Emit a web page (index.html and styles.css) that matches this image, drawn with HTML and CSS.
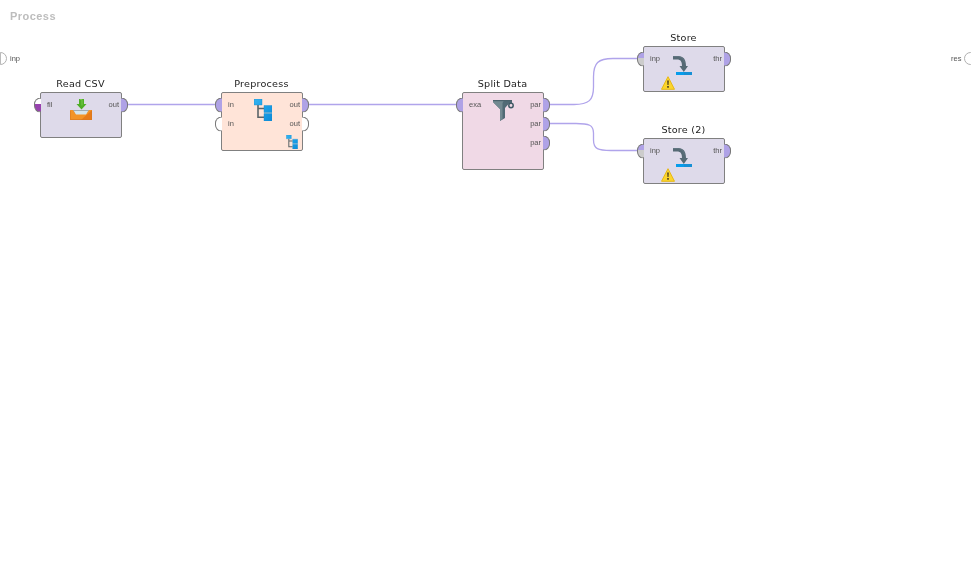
FILE: index.html
```html
<!DOCTYPE html>
<html lang="en">
<head>
<meta charset="utf-8">
<title>Process</title>
<link rel="stylesheet" href="styles.css">
</head>
<body>
<svg class="defs" width="0" height="0" aria-hidden="true">
  <defs>
    <linearGradient id="blue" x1="0" y1="0" x2="1" y2="1"><stop offset="0" stop-color="#35b2ef"/><stop offset=".5" stop-color="#1ba1e8"/><stop offset="1" stop-color="#0d8bd8"/></linearGradient>
    <symbol id="tree" viewBox="0 0 18 22">
      <path d="M4 6v12.3h6M4 9.5h6" fill="none" stroke="#5b6468" stroke-width="1.6"/>
      <path d="M0 0h8v6H0zM10 6.500h8v7h-8zM10 14.500h8V22h-8z" fill="url(#blue)" stroke="#168ccb" stroke-width=".4"/>
    </symbol>
    <symbol id="store" viewBox="0 0 19 19">
      <path d="M0 0h5c5.500 0 8 3.500 8 10H15l-4.200 6L6.500 10H9c0-4.500-1.500-6.500-5-6.500H0z" fill="#566a75"/>
      <path d="M0 .5h4c4 0 7 2 7.300 6" fill="none" stroke="#647984" stroke-width=".8"/>
      <path d="M3 16h16v3H3z" fill="#168fd5"/><path d="M3 16h8v3H3z" fill="#079ceb"/>
    </symbol>
    <symbol id="warning" viewBox="0 0 14 14">
      <path d="M7 .7 13.500 13.300H.5z" fill="#fbd52d" stroke="#e7b817" stroke-linejoin="round"/>
      <path d="M6.100 4.500h1.800l-.3 4.500H6.400zM6.100 10h1.800v1.800H6.100z" fill="#5c4c20"/>
    </symbol>
    <symbol id="import" viewBox="0 0 22 21">
      <path d="M2.500 11h17l2 3v2H.5v-2z" fill="#9eabb4"/>
      <path d="M4 12h14l-1.500 4h-11z" fill="#d5e4eb"/>
      <path d="M0 11h3l3 4.500h10l3-4.500h3v10H0z" fill="#f39427"/>
      <path d="M22 11v10H11z" fill="#e77b19"/>
      <path d="M.4 12v8.600h21.200V12" fill="none" stroke="#d9791e" stroke-width=".7"/>
      <path d="M9 0h5v5h2.500l-5 5.500L6.500 5H9z" fill="#4fae27"/>
      <path d="M10 .5h2v6" fill="none" stroke="#79c94d"/>
    </symbol>
    <symbol id="funnel" viewBox="0 0 21 21">
      <path d="M0 0h19v3h-2.500L12 8v10l-5 3V9L0 2z" fill="#516a75"/>
      <path d="M0 .4h11l-1.500 2.600v16.300L7 20.500V9L0 2z" fill="#738991"/>
      <path d="M0 .6h19" stroke="#4b626c" stroke-width="1.200"/>
      <circle cx="18" cy="5.500" r="2.200" fill="none" stroke="#405b66" stroke-width="1.500"/>
    </symbol>
  </defs>
</svg>
<main class="canvas">
  <h1 class="heading">Process</h1>
  <svg class="wires" width="971" height="587" viewBox="0 0 971 587" aria-hidden="true">
    <path d="M128 104.500H216M309 104.500H457M549 104.500H574C589 104.500 593.500 100 593.500 87V77C593.500 63 598 58.500 613 58.500H638M549 123.500H576C589 123.500 593.500 125 593.500 133V140C593.500 149 598 150.500 611 150.500H638"/>
  </svg>
  <div class="edge edge-in"><i class="ring"></i><span>inp</span></div>
  <div class="edge edge-out"><span>res</span><i class="ring"></i></div>

  <section class="node read lilac">
    <h2>Read CSV</h2>
    <ul class="ports left"><li class="file">fil</li></ul>
    <svg class="icon" width="22" height="21"><use href="#import"/></svg>
    <ul class="ports right"><li>out</li></ul>
  </section>

  <section class="node prep peach">
    <h2>Preprocess</h2>
    <ul class="ports left"><li>in</li><li class="empty">in</li></ul>
    <svg class="icon" width="18" height="22"><use href="#tree"/></svg>
    <ul class="ports right"><li>out</li><li class="empty">out</li></ul>
    <svg class="badge" width="12" height="14"><use href="#tree"/></svg>
  </section>

  <section class="node split pink">
    <h2>Split Data</h2>
    <ul class="ports left"><li>exa</li></ul>
    <svg class="icon" width="21" height="21"><use href="#funnel"/></svg>
    <ul class="ports right"><li>par</li><li>par</li><li>par</li></ul>
  </section>

  <section class="node store1 lilac">
    <h2>Store</h2>
    <ul class="ports left"><li class="half">inp</li></ul>
    <svg class="icon" width="19" height="19"><use href="#store"/></svg>
    <ul class="ports right"><li>thr</li></ul>
    <svg class="warn" width="14" height="14"><use href="#warning"/></svg>
  </section>

  <section class="node store2 lilac">
    <h2>Store (2)</h2>
    <ul class="ports left"><li class="half">inp</li></ul>
    <svg class="icon" width="19" height="19"><use href="#store"/></svg>
    <ul class="ports right"><li>thr</li></ul>
    <svg class="warn" width="14" height="14"><use href="#warning"/></svg>
  </section>
</main>
</body>
</html>
```
FILE: styles.css
```css
* { box-sizing: border-box; }
body { margin: 0; background: #fff; }
.defs { position: absolute; }
.canvas {
  position: relative;
  width: 971px;
  height: 587px;
  overflow: hidden;
  font: 7.5px/12px "Liberation Sans", sans-serif;
  color: #555;
  will-change: transform;
}
.heading {
  margin: 0;
  padding: 9px 0 0 10px;
  font: bold 11px/14px "Liberation Sans", sans-serif;
  letter-spacing: .45px;
  color: #bdbdbd;
}
.wires { position: absolute; inset: 0; }
.wires path { fill: none; stroke: #b0a4eb; stroke-width: 1.3; }

.edge { position: absolute; top: 52px; display: flex; align-items: center; gap: 3px; }
.edge-in { left: -6px; }
.edge-out { left: 951px; gap: 3px; }
.ring { flex: none; width: 13px; height: 13px; border: 1px solid #b0b0b0; border-radius: 50%; }
.edge-in .ring { background: linear-gradient(90deg, transparent 5px, #bbb 5px, #bbb 6px, transparent 6px); }

.node {
  position: absolute;
  width: 82px;
  display: flex;
  justify-content: space-between;
  align-items: flex-start;
  padding: 6px 2px 0 6px;
  border: 1px solid #808080;
  border-radius: 2px;
  background: var(--fill);
}
.lilac { --fill: #dedaea; }
.peach { --fill: #ffe4d8; }
.pink { --fill: #f0d9e6; }
.read { left: 40px; top: 92px; height: 46px; }
.prep { left: 221px; top: 92px; height: 59px; }
.split { left: 462px; top: 92px; height: 78px; }
.store1 { left: 643px; top: 46px; height: 46px; }
.store2 { left: 643px; top: 138px; height: 46px; }

.node h2 {
  position: absolute;
  left: -11px;
  right: -10px;
  top: -16px;
  margin: 0;
  font: 9px/14px "DejaVu Sans", sans-serif;
  letter-spacing: .2px;
  text-align: center;
  color: #222;
  transform: scaleX(1.07);
}
.ports { margin: 0; padding: 0; list-style: none; width: 22px; }
.ports li { position: relative; height: 12px; margin-bottom: 7px; }
.right { text-align: right; }
.ports li::before {
  content: "";
  position: absolute;
  top: -1px;
  width: 6px;
  height: 13px;
  border: 1px solid #787878;
  background: #afa2e6;
  transform: translateY(-.4px);
}
.left li::before { left: -13px; border-right: 0; border-radius: 6.5px 0 0 6.5px; }
.right li::before { right: -9px; border-left: 0; border-radius: 0 6.5px 6.5px 0; }
.ports .empty::before { background: #fff; }
.ports .file::before { background: linear-gradient(#fff 5.5px, #9743ae 5.5px); }
.ports .half::before { background: linear-gradient(#afa2e6 5.5px, #ccc 5.5px); }
.icon { position: absolute; }
.read .icon { left: 29px; top: 6px; }
.prep .icon { left: 32px; top: 6px; }
.split .icon { left: 30px; top: 7px; }
.store1 .icon, .store2 .icon { left: 29px; top: 9px; }
.badge { position: absolute; left: 64px; top: 42px; }
.warn { position: absolute; left: 17px; top: 29px; }
```
